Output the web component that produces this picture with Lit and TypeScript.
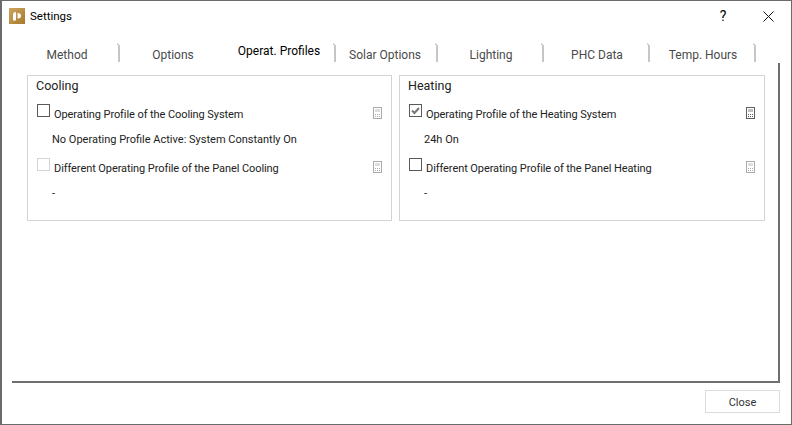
import { LitElement, html, css, svg } from "lit";
import { customElement } from "lit/decorators.js";

const calc = (dim: boolean) => html`<svg class="calc ${dim ? "dim" : ""}" width="9" height="12" viewBox="0 0 9 12" shape-rendering="crispEdges">
  <rect x="0.5" y="0.5" width="8" height="11" fill="#fff" stroke="currentColor"/>
  <rect x="2" y="2" width="5" height="3" fill="currentColor" opacity=".4"/>
  ${[7, 9].map((y) => [2, 4, 6].map((x) => svg`<rect x="${x}" y="${y}" width="1" height="1" fill="currentColor"/>`))}
</svg>`;

@customElement("app-root")
export class AppRoot extends LitElement {
  static styles = css`
    :host { display: block; width: 792px; height: 425px; font-family: Roboto, "Open Sans", sans-serif; font-size: 11px; color: #222; }
    * { box-sizing: border-box; }
    .win { width: 792px; height: 425px; background: #fff; border: 1px solid #6b6b6b; border-left-width: 2px; display: flex; flex-direction: column; }
    .title { height: 30px; display: flex; align-items: center; padding-left: 7px; font-size: 11.5px; color: #000; flex: none; }
    .logo { width: 16px; height: 16px; margin-right: 5px; }
    .title .spacer { flex: 1; }
    .help { width: 12px; font-size: 14px; margin-right: 34px; text-align: center; }
    .close { margin-right: 17px; display: block; }
    .tabs { display: flex; height: 32px; padding-left: 12px; flex: none; }
    .tab { width: 106px; position: relative; font-size: 12px; color: #4a4a4a; text-align: center; padding-top: 17px; }
    .tab.sel { color: #000; padding: 13px 4px 0 0; width: 110px; }
    .tab.short { width: 102px; padding-right: 4px; }
    .tab .sep { position: absolute; right: 0; top: 12px; width: 3px; height: 19px; }
    .frame { margin-left: 10px; width: 768px; height: 320px; border-right: 2px solid #6f6f6f; border-bottom: 2px solid #6f6f6f; padding: 12px 0 0 15px; display: flex; gap: 7px; flex: none; align-items: flex-start; }
    .panel { width: 365px; height: 146px; border: 1px solid #d4d4d4; padding: 2px 9px 0 9px; }
    .panel.right { width: 366px; }
    .ptitle { font-size: 12.5px; height: 19px; line-height: 16px; color: #222; margin-left: -1px; }
    .row { display: flex; align-items: flex-start; height: 18px; margin-top: 8px; }
    .row.second { margin-top: 11px; }
    .row .lbl { margin-left: 4px; flex: 1; line-height: 20px; letter-spacing: -0.08px; }
    .box { width: 13px; height: 13px; margin-top: -1px; border: 1px solid #5a5a5a; background: #fff; flex: none; }
    .box.off { border-color: #d4d4d4; }
    .box svg { display: block; }
    .calc { flex: none; color: #5e5e5e; display: block; margin-top: 2px; }
    .calc.dim { color: #ababab; }
    .val { margin-left: 15px; height: 18px; line-height: 20px; margin-top: 7px; }
    .val.gap { margin-top: 7px; }
    .foot { display: flex; justify-content: flex-end; padding: 7px 11px 0 0; }
    .btn { width: 75px; height: 23px; border: 1px solid #dcdcdc; background: #fff; font-family: inherit; font-size: 11px; color: #333; padding: 1px 0 0; }
  `;

  private sep() {
    return html`<svg class="sep" viewBox="0 0 3 19"><path d="M0 .5 L2 2.5 V19" fill="none" stroke="#8c8c8c" stroke-width="1"/></svg>`;
  }

  private panel(title: string, r1: string, v1: string, r2: string, checked: boolean, disabled: boolean, right: boolean) {
    return html`<div class="panel ${right ? "right" : ""}">
      <div class="ptitle">${title}</div>
      <div class="row">
        <span class="box">${checked ? html`<svg width="11" height="11" viewBox="0 0 11 11"><path d="M2 5.5 L4.5 8 L9 3" fill="none" stroke="#777" stroke-width="2"/></svg>` : ""}</span>
        <span class="lbl">${r1}</span>${calc(!checked)}
      </div>
      <div class="val">${v1}</div>
      <div class="row second">
        <span class="box ${disabled ? "off" : ""}"></span>
        <span class="lbl">${r2}</span>${calc(true)}
      </div>
      <div class="val gap">-</div>
    </div>`;
  }

  render() {
    const tabs = ["Method", "Options", "Operat. Profiles", "Solar Options", "Lighting", "PHC Data", "Temp. Hours"];
    return html`<div class="win">
      <div class="title">
        <svg class="logo" viewBox="0 0 16 16">
          <defs><linearGradient id="g" x1="0" y1="0" x2="1" y2="1"><stop offset="0" stop-color="#cda660"/><stop offset="1" stop-color="#a87a2a"/></linearGradient></defs>
          <rect width="16" height="16" fill="url(#g)"/>
          <path d="M4 12.5 V7 Q4 4 7 4 V12.5 Z" fill="#fff"/>
          <path d="M8.5 5 Q12 5 12 8 Q12 10.5 8.5 10.5 Z" fill="#fff"/>
        </svg>
        <span>Settings</span><span class="spacer"></span>
        <span class="help">?</span>
        <svg class="close" width="11" height="11" viewBox="0 0 11 11"><path d="M.5 .5 L10.5 10.5 M10.5 .5 L.5 10.5" stroke="#111" stroke-width="1" fill="none"/></svg>
      </div>
      <div class="tabs">
        ${tabs.map((t, i) => html`<div class="tab ${i === 2 ? "sel" : ""} ${i === 3 ? "short" : ""}">${t}${i === 1 ? "" : this.sep()}</div>`)}
      </div>
      <div class="frame">
        ${this.panel("Cooling", "Operating Profile of the Cooling System", "No Operating Profile Active: System Constantly On", "Different Operating Profile of the Panel Cooling", false, true, false)}
        ${this.panel("Heating", "Operating Profile of the Heating System", "24h On", "Different Operating Profile of the Panel Heating", true, false, true)}
      </div>
      <div class="foot"><button class="btn">Close</button></div>
    </div>`;
  }
}
